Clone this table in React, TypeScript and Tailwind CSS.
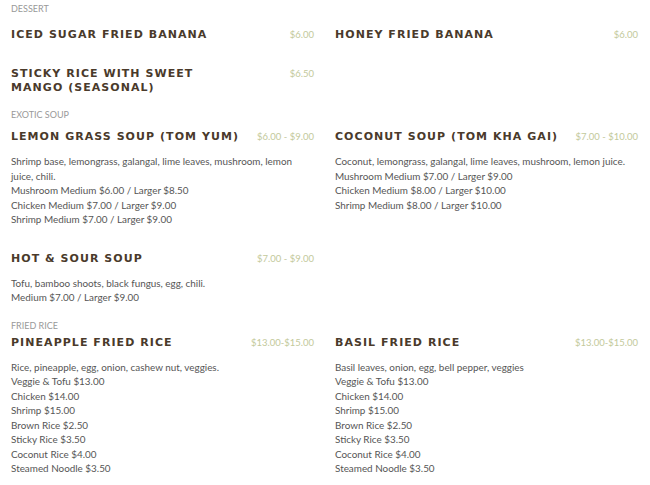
type Item = {
  name: string
  price: string
  nameWidth?: string
  lines?: string[]
}

type Row = [Item, Item | null]

type Section = {
  label: string
  labelClass: string
  rows: Row[]
}

const sections: Section[] = [
  {
    label: "Dessert",
    labelClass: "pt-[3px] pb-[13px]",
    rows: [
      [
        { name: "Iced Sugar Fried Banana", price: "$6.00" },
        { name: "Honey Fried Banana", price: "$6.00" },
      ],
      [{ name: "Sticky Rice with Sweet Mango (Seasonal)", price: "$6.50", nameWidth: "max-w-[215px]" }, null],
    ],
  },
  {
    label: "Exotic Soup",
    labelClass: "pt-[14px] pb-[9px]",
    rows: [
      [
        {
          name: "Lemon Grass Soup (Tom Yum)",
          price: "$6.00 - $9.00",
          lines: [
            "Shrimp base, lemongrass, galangal, lime leaves, mushroom, lemon juice, chili.",
            "Mushroom Medium $6.00 / Larger $8.50",
            "Chicken Medium $7.00 / Larger $9.00",
            "Shrimp Medium $7.00 / Larger $9.00",
          ],
        },
        {
          name: "Coconut Soup (Tom Kha Gai)",
          price: "$7.00 - $10.00",
          lines: [
            "Coconut, lemongrass, galangal, lime leaves, mushroom, lemon juice.",
            "Mushroom Medium $7.00 / Larger $9.00",
            "Chicken Medium $8.00 / Larger $10.00",
            "Shrimp Medium $8.00 / Larger $10.00",
          ],
        },
      ],
      [
        {
          name: "Hot & Sour Soup",
          price: "$7.00 - $9.00",
          lines: ["Tofu, bamboo shoots, black fungus, egg, chili.", "Medium $7.00 / Larger $9.00"],
        },
        null,
      ],
    ],
  },
  {
    label: "Fried Rice",
    labelClass: "pt-[15px] pb-[4px]",
    rows: [
      [
        {
          name: "Pineapple Fried Rice",
          price: "$13.00-$15.00",
          lines: [
            "Rice, pineapple, egg, onion, cashew nut, veggies.",
            "Veggie & Tofu $13.00",
            "Chicken $14.00",
            "Shrimp $15.00",
            "Brown Rice $2.50",
            "Sticky Rice $3.50",
            "Coconut Rice $4.00",
            "Steamed Noodle $3.50",
          ],
        },
        {
          name: "Basil Fried Rice",
          price: "$13.00-$15.00",
          lines: [
            "Basil leaves, onion, egg, bell pepper, veggies",
            "Veggie & Tofu $13.00",
            "Chicken $14.00",
            "Shrimp $15.00",
            "Brown Rice $2.50",
            "Sticky Rice $3.50",
            "Coconut Rice $4.00",
            "Steamed Noodle $3.50",
          ],
        },
      ],
    ],
  },
]

function MenuItem({ item }: { item: Item }) {
  return (
    <div>
      <div className="flex items-start justify-between gap-2">
        <h3
          className={`${item.nameWidth ?? ""} text-[11px] leading-[14px] font-bold tracking-[1.05px] text-[#4a3a2b] uppercase [font-family:'DejaVu_Sans',sans-serif]`}
        >
          {item.name}
        </h3>
        <span className="shrink-0 text-[9.5px] leading-[14px] text-[#c3c99b] [font-family:Lato,sans-serif]">{item.price}</span>
      </div>
      {item.lines ? (
        <div className="pt-[10px] text-[9.9px] leading-[14.5px] text-[#555] [font-family:Lato,sans-serif]">
          {item.lines.map((line) => (
            <p key={line}>{line}</p>
          ))}
        </div>
      ) : null}
    </div>
  )
}

export default function App() {
  return (
    <div className="min-h-screen w-[650px] bg-white pr-[12px] pl-[11px]">
      {sections.map((section) => (
        <section key={section.label}>
          <div
            className={`${section.labelClass} text-[9px] leading-[12px] text-[#999] uppercase [font-family:Lato,sans-serif]`}
          >
            {section.label}
          </div>
          <div className="flex flex-col gap-y-[25px]">
            {section.rows.map((row, index) => (
              <div key={index} className="grid grid-cols-2 gap-x-[21px]">
                <MenuItem item={row[0]} />
                {row[1] ? <MenuItem item={row[1]} /> : <div />}
              </div>
            ))}
          </div>
        </section>
      ))}
    </div>
  )
}
